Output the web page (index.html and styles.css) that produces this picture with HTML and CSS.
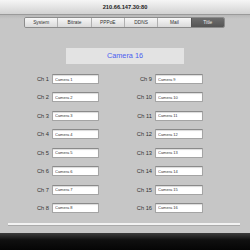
FILE: index.html
```html
<!DOCTYPE html>
<html lang="en">
<head>
<meta charset="UTF-8">
<meta name="viewport" content="width=device-width, initial-scale=1.0">
<title>Title Settings</title>
<link rel="stylesheet" href="styles.css">
</head>
<body>

<div class="page">
    <div class="header">210.66.147.30:80</div>

    <div class="tabs">
        <div class="tab">System</div>
        <div class="tab">Bitrate</div>
        <div class="tab">PPPoE</div>
        <div class="tab">DDNS</div>
        <div class="tab">Mail</div>
        <div class="tab selected">Title</div>
    </div>

    <div class="title-box">Camera 16</div>

    <div class="channels">
        <div class="column">
            <div class="row"><span class="label">Ch 1</span><input class="name" type="text" value="Camera 1"></div>
            <div class="row"><span class="label">Ch 2</span><input class="name" type="text" value="Camera 2"></div>
            <div class="row"><span class="label">Ch 3</span><input class="name" type="text" value="Camera 3"></div>
            <div class="row"><span class="label">Ch 4</span><input class="name" type="text" value="Camera 4"></div>
            <div class="row"><span class="label">Ch 5</span><input class="name" type="text" value="Camera 5"></div>
            <div class="row"><span class="label">Ch 6</span><input class="name" type="text" value="Camera 6"></div>
            <div class="row"><span class="label">Ch 7</span><input class="name" type="text" value="Camera 7"></div>
            <div class="row"><span class="label">Ch 8</span><input class="name" type="text" value="Camera 8"></div>
        </div>
        <div class="column">
            <div class="row"><span class="label">Ch 9</span><input class="name" type="text" value="Camera 9"></div>
            <div class="row"><span class="label">Ch 10</span><input class="name" type="text" value="Camera 10"></div>
            <div class="row"><span class="label">Ch 11</span><input class="name" type="text" value="Camera 11"></div>
            <div class="row"><span class="label">Ch 12</span><input class="name" type="text" value="Camera 12"></div>
            <div class="row"><span class="label">Ch 13</span><input class="name" type="text" value="Camera 13"></div>
            <div class="row"><span class="label">Ch 14</span><input class="name" type="text" value="Camera 14"></div>
            <div class="row"><span class="label">Ch 15</span><input class="name" type="text" value="Camera 15"></div>
            <div class="row"><span class="label">Ch 16</span><input class="name" type="text" value="Camera 16"></div>
        </div>
    </div>

    <div class="divider"></div>
</div>

<div class="footer"></div>

</body>
</html>
```

FILE: styles.css
```css
body {
    margin: 0;
    padding: 0;
    width: 250px;
    height: 250px;
    overflow: hidden;
    font-family: "Liberation Sans", Arial, sans-serif;
    background-color: #c6c6c6;
}

.page {
    height: 233px;
    display: flex;
    flex-direction: column;
    background: linear-gradient(#b8b8b8, #c6c6c6 4px);
    background-position: 0 15px;
    background-repeat: no-repeat;
}

.header {
    height: 14px;
    line-height: 14px;
    text-align: center;
    font-size: 5.7px;
    font-weight: bold;
    color: #222;
    background: linear-gradient(#f6f6f6, #d2d2d2);
    border-bottom: 1px solid #9a9a9a;
}

.tabs {
    display: flex;
    width: 199px;
    height: 9px;
    margin: 2px 0 0 24px;
    border: 1px solid #8c8c8c;
    border-radius: 2px;
    overflow: hidden;
}

.tab {
    flex: 1;
    font-size: 4.8px;
    line-height: 9px;
    text-align: center;
    color: #333;
    background: linear-gradient(#f7f7f7, #dadada);
    border-left: 1px solid #b0b0b0;
}

.tab:first-child {
    border-left: none;
}

.tab.selected {
    color: #eee;
    background: linear-gradient(#6e6e6e, #555);
    border-left-color: #555;
}

.title-box {
    width: 118px;
    height: 16px;
    line-height: 16px;
    margin: 20px 0 0 66px;
    text-align: center;
    font-size: 7.3px;
    color: #4a5ef0;
    background-color: #e3e3e3;
}

.channels {
    display: grid;
    grid-template-columns: 70px 70px;
    column-gap: 33px;
    padding-left: 30px;
    margin-top: 10px;
}

.column {
    display: flex;
    flex-direction: column;
    gap: 8.43px;
}

.row {
    display: flex;
    align-items: center;
    height: 10px;
}

.label {
    width: 19px;
    margin-right: 3px;
    text-align: right;
    font-size: 5.7px;
    color: #333;
}

.name {
    box-sizing: border-box;
    width: 47px;
    height: 10px;
    margin: 0;
    padding: 0 2px;
    border: 1px solid #a4a4a4;
    border-top-color: #8a8a8a;
    border-radius: 1px;
    background-color: #fff;
    box-shadow: inset 0 1px 1px rgba(0, 0, 0, 0.15);
    font-family: "Liberation Sans", Arial, sans-serif;
    font-size: 4px;
    color: #333;
    outline: none;
}

.column:last-child .name {
    width: 48px;
}

.divider {
    width: 232px;
    height: 2px;
    margin: 10px 0 0 8px;
    background-color: #f2f2f2;
    border-bottom: 1px solid #aaa;
}

.footer {
    height: 17px;
    background: linear-gradient(#3c3c3c, #101010 40%, #050505);
}
```
